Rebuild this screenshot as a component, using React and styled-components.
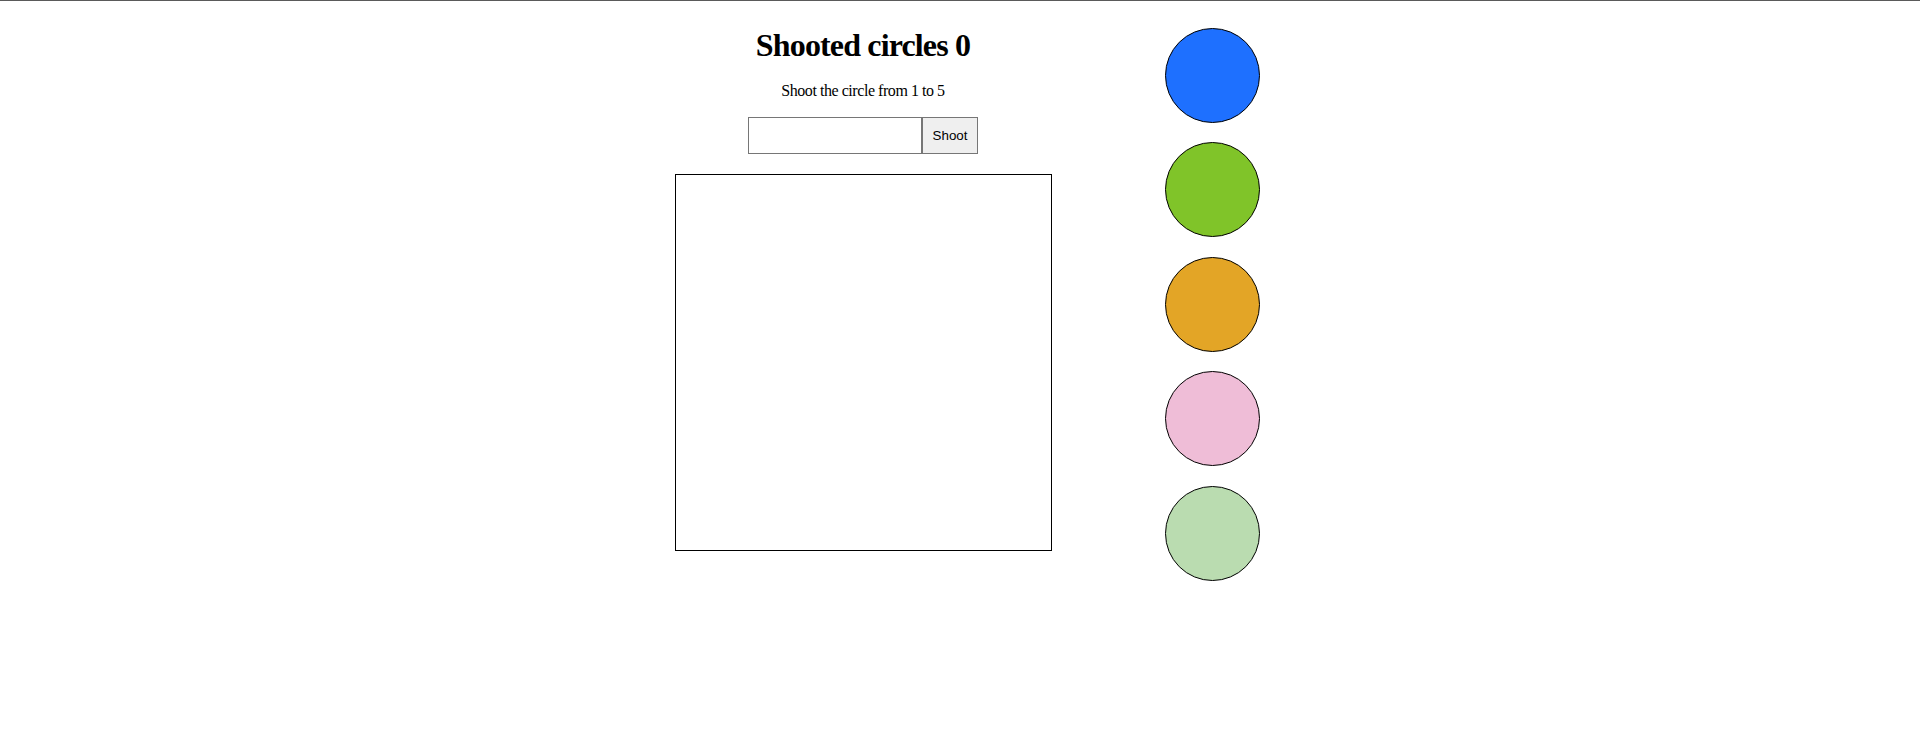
import { useState } from "react";
import { styled, createGlobalStyle } from "styled-components";

const GlobalStyle = createGlobalStyle`
  html, body {
    margin: 0;
    padding: 0;
    background: #ffffff;
  }
  body {
    border-top: 1px solid #5a5a5a;
    font-family: "Liberation Serif", "Times New Roman", serif;
    color: #000;
  }
`;

const Page = styled.div`
  display: flex;
  justify-content: center;
  align-items: flex-start;
  gap: 113px;
  padding: 26.5px 0 0 14px;
  min-height: 700px;
`;

const GameColumn = styled.div`
  width: 377px;
  display: flex;
  flex-direction: column;
  align-items: center;
`;

const Title = styled.h1`
  margin: -1px 0 0;
  font-size: 32px;
  font-weight: bold;
  letter-spacing: -0.85px;
`;

const Hint = styled.p`
  margin: 18px 0 0;
  font-size: 16px;
  letter-spacing: -0.45px;
`;

const ShootForm = styled.form`
  display: flex;
  margin-top: 17.5px;
`;

const Field = styled.input`
  box-sizing: border-box;
  width: 174px;
  height: 37px;
  border: 1px solid #767676;
  padding: 1px 2px;
  font-size: 13.33px;
  font-family: "Liberation Sans", Arial, sans-serif;
  outline: none;
`;

const ShootButton = styled.button`
  box-sizing: border-box;
  width: 56px;
  height: 37px;
  border: 1px solid #767676;
  background: #efefef;
  font-size: 13.33px;
  font-family: "Liberation Sans", Arial, sans-serif;
  color: #000;
  padding: 0;
  cursor: pointer;
`;

const Target = styled.div`
  box-sizing: border-box;
  width: 377px;
  height: 377px;
  margin-top: 20px;
  border: 1px solid #000;
  background: #fff;
`;

const CircleColumn = styled.div`
  display: flex;
  flex-direction: column;
  gap: 19.5px;
`;

const Circle = styled.div`
  box-sizing: border-box;
  width: 95px;
  height: 95px;
  border-radius: 50%;
  border: 1px solid #000;
  background: ${(p) => p.$color};
`;

const colors = ["#1e70ff", "#80c429", "#e3a526", "#efbdd7", "#badcb0"];

function App() {
  const [shot, setShot] = useState(0);
  const [value, setValue] = useState("");

  const handleShoot = (e) => {
    e.preventDefault();
    const n = Number(value);
    if (n >= 1 && n <= 5) setShot((s) => s + 1);
    setValue("");
  };

  return (
    <>
      <GlobalStyle />
      <Page>
        <GameColumn>
          <Title>Shooted circles {shot}</Title>
          <Hint>Shoot the circle from 1 to 5</Hint>
          <ShootForm onSubmit={handleShoot}>
            <Field value={value} onChange={(e) => setValue(e.target.value)} />
            <ShootButton type="submit">Shoot</ShootButton>
          </ShootForm>
          <Target />
        </GameColumn>
        <CircleColumn>
          {colors.map((c) => (
            <Circle key={c} $color={c} />
          ))}
        </CircleColumn>
      </Page>
    </>
  );
}

export default App;
